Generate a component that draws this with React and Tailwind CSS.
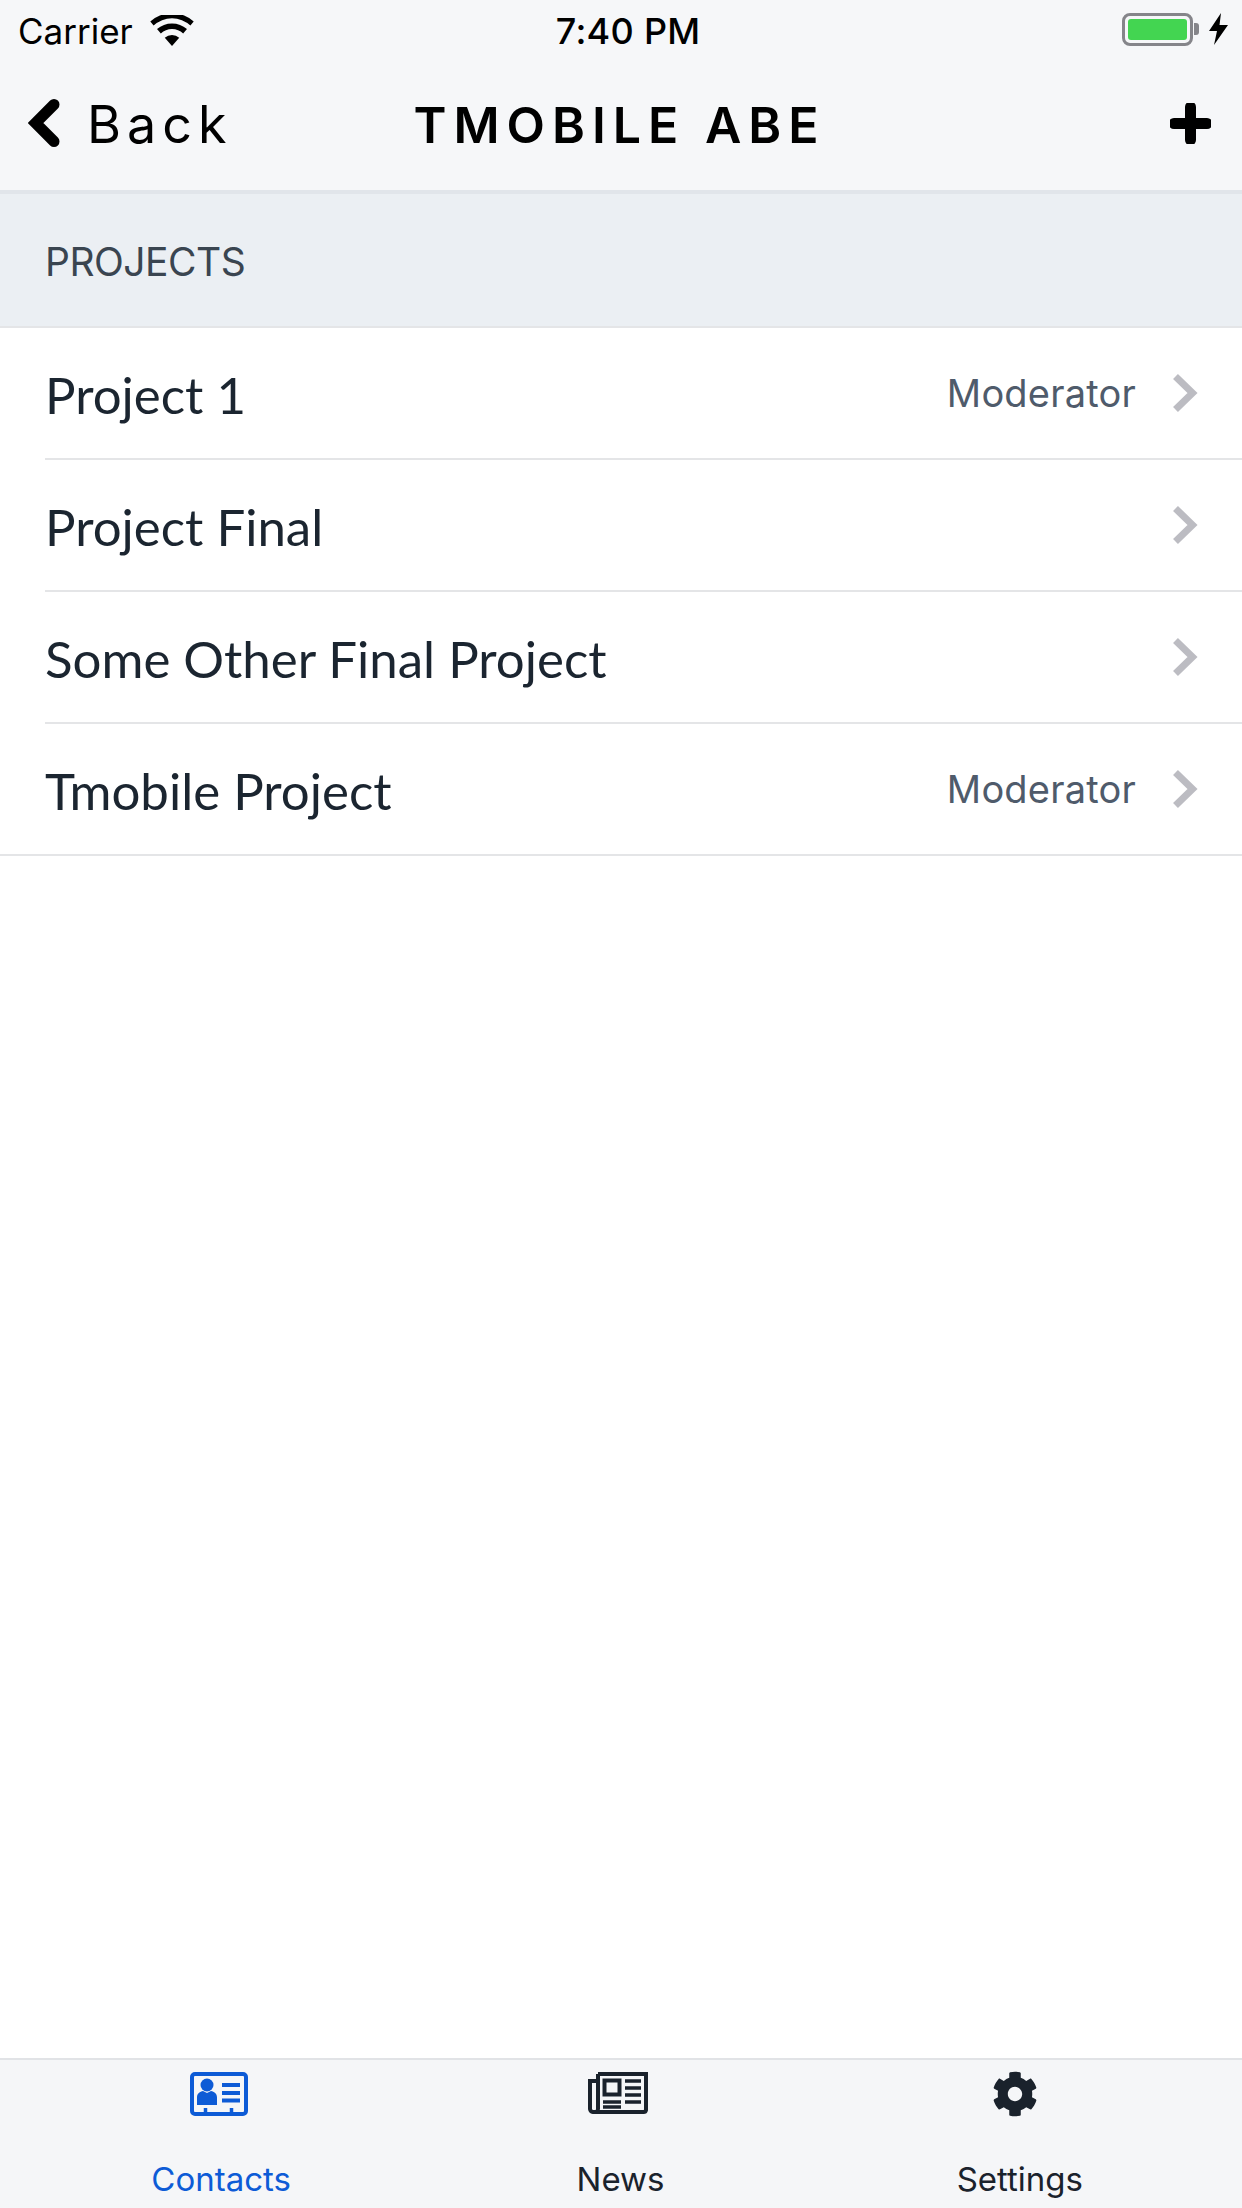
import React from "react";
import { FaCog } from "react-icons/fa";

const Chevron = () => (
  <svg width="26" height="40" viewBox="0 0 26 40" className="ml-[36px] shrink-0">
    <path d="M3.5 3.5 L20.5 20 L3.5 36.5" fill="none" stroke="#bcbcc2" strokeWidth="7" strokeLinejoin="miter" />
  </svg>
);

const Row = ({ name, role }) => (
  <div className="h-[130px] pl-[45px] bg-white">
    <div className="h-full flex items-center justify-between pr-[44px]">
      <span className="text-[51px] text-[#1b2530] font-['Lato'] leading-none mt-[2px]">{name}</span>
      <div className="flex items-center">
        {role && <span className="text-[38px] leading-none text-[#4f5b6b] font-['Inter'] tracking-[0.2px]">{role}</span>}
        <Chevron />
      </div>
    </div>
  </div>
);

const Line = ({ inset }) => <div className={inset ? "h-[2px] ml-[45px] bg-[#e4e5e7]" : "h-[2px] bg-[#e4e5e7]"} />;

const Tab = ({ icon, label, active }) => (
  <div className="flex flex-col items-center">
    <div className="h-[44px] flex items-center justify-center">{icon}</div>
    <span className={active ? "mt-[41px] ml-[5px] text-[33px] leading-[44px] text-[#0d5bd6] font-['Inter']" : "mt-[41px] ml-[5px] text-[33px] leading-[44px] text-[#1a222c] font-['Inter']"}>{label}</span>
  </div>
);

export default function App() {
  return (
    <div className="w-[1242px] h-[2208px] flex flex-col bg-white overflow-hidden">
      <div className="h-[190px] bg-[#f6f7f9] flex flex-col shrink-0">
        <div className="h-[60px] pt-[2px] pl-[18px] pr-[14px] flex items-center text-black">
          <span className="text-[35px] font-['Inter'] leading-none">Carrier</span>
          <svg width="44" height="31" viewBox="0 0 42 30" className="ml-[17px] -mt-[2px]">
            <path d="M21 30 L14 22 A10.5 10.5 0 0 1 28 22 Z" fill="#000" />
            <path d="M10.2 18 L6.5 13.6 A22 22 0 0 1 35.5 13.6 L31.8 18 A15.5 15.5 0 0 0 10.2 18 Z" fill="#000" />
            <path d="M3.2 10.2 L0 6.4 A31 31 0 0 1 42 6.4 L38.8 10.2 A26 26 0 0 0 3.2 10.2 Z" fill="#000" />
          </svg>
          <span className="ml-[362px] text-[36px] font-medium font-['Inter'] leading-none tracking-[0.3px]">7:40 PM</span>
          <div className="ml-auto flex items-center -mt-[4px]">
            <div className="w-[71px] h-[33px] rounded-[8px] border-[3px] border-[#85858a] p-[3px]">
              <div className="w-full h-full rounded-[3px] bg-[#43d551]" />
            </div>
            <div className="w-[5px] h-[12px] rounded-r-[3px] bg-[#85858a] ml-[1px]" />
            <svg width="19" height="32" viewBox="0 0 19 32" className="ml-[10px]">
              <path d="M12 0 L0 18 L8 18 L5 32 L19 12 L10.5 12 Z" fill="#000" />
            </svg>
          </div>
        </div>
        <div className="flex-1 grid grid-cols-[1fr_auto_1fr] items-center pl-[28px] pr-[31px] text-black -mt-[1px]">
          <div className="flex items-center">
            <svg width="34" height="48" viewBox="0 0 34 48" className="-mt-[3px]">
              <path d="M26 5.5 L7.5 24 L26 42.5" fill="none" stroke="#000" strokeWidth="11" strokeLinecap="round" strokeLinejoin="miter" />
            </svg>
            <span className="ml-[25px] text-[52px] font-['Inter'] tracking-[6px] leading-none">Back</span>
          </div>
          <span className="text-[50px] font-semibold font-['Inter'] tracking-[7px] leading-none">TMOBILE ABE</span>
          <div className="flex justify-end">
            <svg width="41" height="41" viewBox="0 0 41 41" className="-mt-[3px]">
              <path d="M20.5 4 V37 M4 20.5 H37" stroke="#000" strokeWidth="11" strokeLinecap="round" />
            </svg>
          </div>
        </div>
      </div>
      <div className="h-[4px] bg-[#e1e5ea] shrink-0" />
      <div className="h-[132px] bg-[#ebeff3] flex items-center pl-[45px] shrink-0">
        <span className="text-[39px] text-[#3a4550] font-['Inter'] tracking-[-0.5px] mt-[5px]">PROJECTS</span>
      </div>
      <Line />
      <Row name="Project 1" role="Moderator" />
      <Line inset />
      <Row name="Project Final" />
      <Line inset />
      <Row name="Some Other Final Project" />
      <Line inset />
      <Row name="Tmobile Project" role="Moderator" />
      <Line />
      <div className="flex-1" />
      <div className="h-[150px] border-t-2 border-[#e1e3e6] bg-[#f5f6f8] pt-[12px] pl-[19px] pr-[25px] grid grid-cols-3 shrink-0">
        <Tab
          active
          label="Contacts"
          icon={
            <svg width="58" height="44" viewBox="0 0 58 44">
              <rect x="2" y="2" width="54" height="40" rx="3" fill="none" stroke="#0d5bd6" strokeWidth="4" />
              <circle cx="17" cy="13" r="6.5" fill="#0d5bd6" />
              <path d="M7 33 V25.5 C7 21.5 10 19.5 13 19 L17 21 L21 19 C24 19.5 27 21.5 27 25.5 V33 Z" fill="#0d5bd6" />
              <path d="M32 13 H50 M32 21 H50 M32 28.5 H50" stroke="#0d5bd6" strokeWidth="4" />
              <path d="M15.5 36 V42 M41.5 36 V42" stroke="#0d5bd6" strokeWidth="3.5" />
            </svg>
          }
        />
        <Tab
          label="News"
          icon={
            <svg width="60" height="42" viewBox="0 0 60 42" className="-mt-[2px]">
              <path d="M10 2 H58 V38 A2.5 2.5 0 0 1 55.5 40 H5 A3.5 3.5 0 0 1 2 37 V9 H10 M10 2 V37 A3.5 3.5 0 0 1 5 40" fill="none" stroke="#1a222c" strokeWidth="4" />
              <rect x="16.5" y="8.5" width="15" height="14" fill="none" stroke="#1a222c" strokeWidth="4" />
              <path d="M15 30 H33 M15 35 H33 M37 9 H53 M37 16 H53 M37 23 H53 M37 30 H53" stroke="#1a222c" strokeWidth="3.6" />
            </svg>
          }
        />
        <Tab label="Settings" icon={<FaCog className="text-[46px] text-[#1a222c] -ml-[4px]" />} />
      </div>
    </div>
  );
}
